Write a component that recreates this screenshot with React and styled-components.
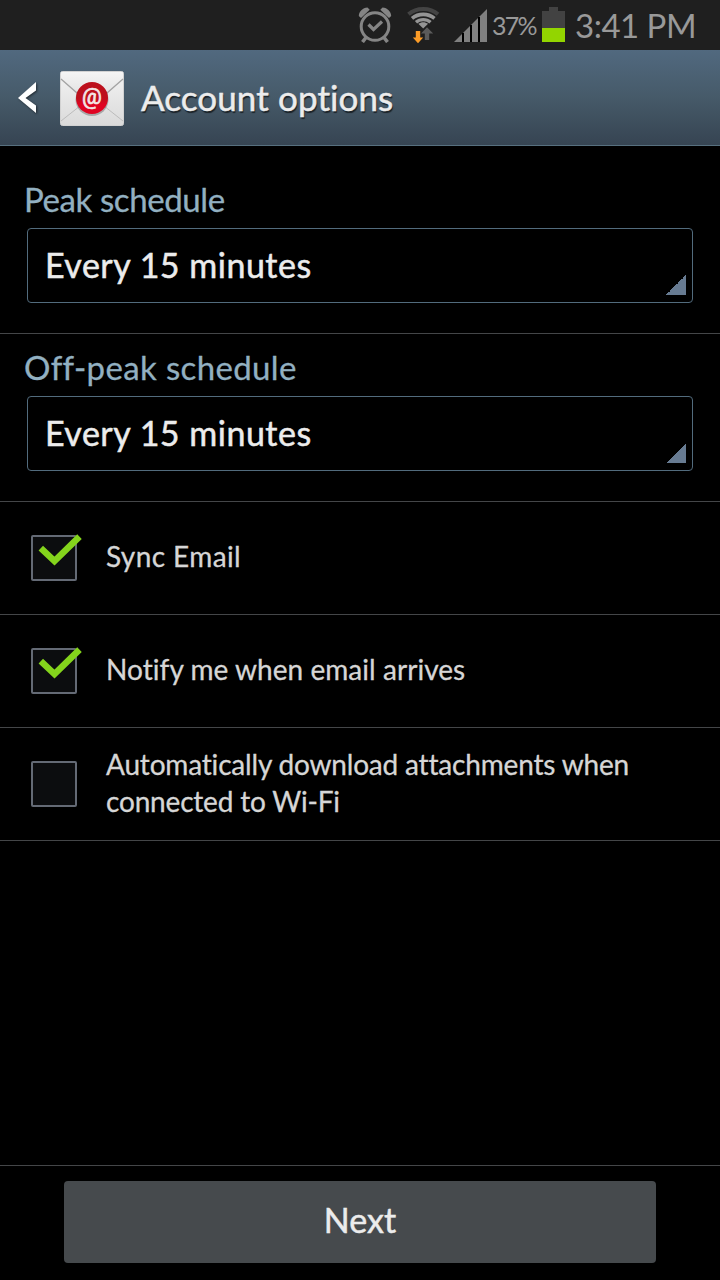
import React, { useState } from 'react';
import styled, { createGlobalStyle } from 'styled-components';

const SCHEDULES = [
  { id: 'peak', label: 'Peak schedule', value: 'Every 15 minutes', spacing: '-0.4px' },
  { id: 'offPeak', label: 'Off-peak schedule', value: 'Every 15 minutes', spacing: '0.35px' },
];

const OPTIONS = [
  { id: 'sync', text: 'Sync Email', checked: true, spacing: '0.4px' },
  { id: 'notify', text: 'Notify me when email arrives', checked: true, spacing: '0.05px' },
  { id: 'download', text: 'Automatically download attachments when connected to Wi-Fi', checked: false, spacing: '-0.18px' },
];

export default function App() {
  const [options, setOptions] = useState(OPTIONS);

  const toggle = (id) => {
    setOptions(options.map((o) => (o.id === id ? { ...o, checked: !o.checked } : o)));
  };

  return (
    <Screen>
      <GlobalStyle />
      <StatusBar>
        <AlarmIcon />
        <WifiIcon />
        <SignalIcon />
        <Percent>37%</Percent>
        <BatteryIcon />
        <Clock>3:41 PM</Clock>
      </StatusBar>
      <Header>
        <BackIcon />
        <MailIcon />
        <Title>Account options</Title>
      </Header>
      {SCHEDULES.map((s, i) => (
        <Schedule key={s.id} $first={i === 0}>
          <ScheduleLabel $spacing={s.spacing}>{s.label}</ScheduleLabel>
          <Spinner>{s.value}</Spinner>
        </Schedule>
      ))}
      {options.map((o) => (
        <OptionRow key={o.id} onClick={() => toggle(o.id)}>
          <CheckBox>{o.checked && <CheckMark />}</CheckBox>
          <OptionText $spacing={o.spacing}>{o.text}</OptionText>
        </OptionRow>
      ))}
      <Footer>
        <NextButton>Next</NextButton>
      </Footer>
    </Screen>
  );
}

function AlarmIcon() {
  return (
    <svg width="34" height="36" viewBox="0 0 34 36" fill="none" stroke="#858585">
      <circle cx="17" cy="19.5" r="13.8" strokeWidth="3" />
      <path d="M11 16l5 5 8.500-8" transform="translate(-.5 1.500)" strokeWidth="3.200" />
      <path d="M8 30.500l-3.500 4.500M26 30.500l3.500 4.500" strokeWidth="3.600" />
      <path d="M.8 9C1 4.500 4.500 .8 9.500 .5l2.200 2.300L3 11zM33.200 9C33 4.500 29.500 .8 24.500 .5l-2.200 2.300L31 11z" fill="#858585" stroke="none" />
    </svg>
  );
}

function WifiIcon() {
  return (
    <svg width="34" height="38" viewBox="0 0 34 38" fill="none">
      <path d="M1.500 8.300C9.500 1.300 23 1.300 31 8.300" stroke="#444" strokeWidth="4" />
      <path d="M5 12.300c6.500-5.300 16-5.300 22.500 0" stroke="#959595" strokeWidth="3.600" />
      <path d="M9 16.300c4-3.600 10.500-3.600 14.500 0" stroke="#959595" strokeWidth="3.400" />
      <path d="M11.300 17.800c3-2.200 6.800-2.200 9.800 0L16.200 22.500z" fill="#959595" />
      <path d="M8.800 25h4.400v6.500h3L11 37.200 5.800 31.500h3z" fill="#fc9c27" />
      <path d="M17.800 34h4.400v-6.500h4L20 21.300 14 27.500h3.800z" fill="#5b5b5b" />
    </svg>
  );
}

function SignalIcon() {
  return (
    <svg width="33" height="33" viewBox="0 0 33 33">
      <path d="M0 33L33 0v33z" fill="#808080" />
      <path d="M8 24h2v9H8zM16 16h2v17h-2zM24 8h2v25h-2z" fill="#000" />
    </svg>
  );
}

function BatteryIcon() {
  return (
    <BatterySvg width="23" height="35" viewBox="0 0 23 35">
      <path d="M7 0h9v4h7v17H0V4h7z" fill="#424242" />
      <path d="M0 21h23v14H0z" fill="#93d500" />
    </BatterySvg>
  );
}

function BackIcon() {
  return (
    <BackSvg width="20" height="34" viewBox="0 0 20 34">
      <path d="M18 1v8.500L7.500 17 18 24.500v7.500L0 17z" fill="#fff" />
    </BackSvg>
  );
}

function MailIcon() {
  return (
    <MailSvg width="64" height="55" viewBox="0 0 64 55">
      <defs>
        <linearGradient id="paper" x1="0" y1="0" x2="0" y2="1">
          <stop offset="0" stopColor="#f3f3f3" />
          <stop offset="1" stopColor="#dadada" />
        </linearGradient>
        <linearGradient id="flap" x1="0" y1="0" x2="0" y2="1">
          <stop offset="0" stopColor="#f5f5f5" />
          <stop offset="1" stopColor="#dcdcdc" />
        </linearGradient>
        <linearGradient id="seal" x1="0" y1="0" x2="0" y2="1">
          <stop offset="0" stopColor="#bd101c" />
          <stop offset=".5" stopColor="#bd101c" />
          <stop offset=".7" stopColor="#e00422" />
        </linearGradient>
      </defs>
      <rect x=".5" y=".5" width="63" height="54" rx="2" fill="url(#paper)" stroke="#d2d2d2" />
      <path d="M1 50L25 31M63 50L39 31" fill="none" stroke="#bcbcbc" />
      <path d="M1 8L1 2q0-1 1-1h60q1 0 1 1v6L38 31H26z" fill="url(#flap)" />
      <path d="M1 8l24 21M63 8L39 29" fill="none" stroke="#a3a3a3" strokeWidth="1.300" />
      <circle cx="32" cy="28.500" r="16.500" fill="#000" opacity=".25" />
      <circle cx="32" cy="27" r="16" fill="url(#seal)" />
      <text x="32" y="33" textAnchor="middle" fill="#f4e6e6" stroke="#f4e6e6" strokeWidth=".7" fontFamily="Roboto, sans-serif" fontSize="22">@</text>
    </MailSvg>
  );
}

function CheckMark() {
  return (
    <CheckSvg width="46" height="36" viewBox="0 0 46 36">
      <path d="M3.800 14.200L17.500 27 42.500 2.700" fill="none" stroke="#84d41c" strokeWidth="6.500" />
    </CheckSvg>
  );
}

const GlobalStyle = createGlobalStyle`
  body {
    margin: 0;
    background: #000;
  }
`;

const Screen = styled.div`
  width: 720px;
  height: 1280px;
  display: flex;
  flex-direction: column;
  overflow: hidden;
  background: #000;
  color: #ececec;
  font-family: "Choco cooky", Lato, "Open Sans", sans-serif;
`;

const StatusBar = styled.div`
  height: 50px;
  flex: none;
  display: flex;
  align-items: center;
  box-sizing: border-box;
  padding-left: 358px;
  background: #1f1f1f;
  color: #999;
  white-space: nowrap;

  svg {
    flex: none;
  }

  svg:nth-of-type(2) {
    margin-left: 15px;
  }

  svg:nth-of-type(3) {
    margin: 1px 6px 0 13px;
  }
`;

const Percent = styled.span`
  width: 49px;
  margin-left: -1px;
  font-size: 25px;
  letter-spacing: -1.8px;
  line-height: 50px;
`;

const BatterySvg = styled.svg`
  margin: 0 0 1px 1px;
`;

const Clock = styled.span`
  margin-left: 10px;
  font-size: 33px;
  line-height: 48px;
  letter-spacing: -0.5px;
`;

const Header = styled.div`
  height: 96px;
  flex: none;
  display: flex;
  align-items: center;
  box-sizing: border-box;
  padding-left: 18px;
  border-bottom: 1px solid #57707f;
  background: linear-gradient(#51697f, #465a69 50%, #364452);
`;

const BackSvg = styled.svg`
  filter: drop-shadow(1px 1px 1px #0008);
`;

const MailSvg = styled.svg`
  margin: 1px 0 0 22px;
`;

const Title = styled.h1`
  margin: -2px 0 0 17px;
  font-size: 35px;
  font-weight: 400;
  letter-spacing: 0.1px;
  text-shadow: 1px 2px 1px #0009;
  -webkit-text-stroke: 0.5px #ececec;
`;

const Schedule = styled.div`
  height: ${({ $first }) => ($first ? 188 : 168)}px;
  flex: none;
  display: flex;
  flex-direction: column;
  box-sizing: border-box;
  padding: ${({ $first }) => ($first ? 32 : 12)}px 27px 0;
  border-bottom: 1px solid #444648;
`;

const ScheduleLabel = styled.div`
  height: 50px;
  margin-left: -3px;
  color: #92b0c1;
  font-size: 33px;
  line-height: 42px;
  letter-spacing: ${({ $spacing }) => $spacing};
  -webkit-text-stroke: 0.3px #92b0c1;
`;

const Spinner = styled.div`
  height: 75px;
  box-sizing: border-box;
  padding-left: 17px;
  border: 1px solid #526b7d;
  border-radius: 4px;
  background: linear-gradient(135deg, transparent 50%, #677b92 50%) right 6px bottom 7px / 20px 20px no-repeat;
  font-size: 34px;
  line-height: 72px;
  letter-spacing: 0.5px;
  -webkit-text-stroke: 0.5px #ececec;
`;

const OptionRow = styled.div`
  height: 113px;
  flex: none;
  display: flex;
  align-items: center;
  box-sizing: border-box;
  padding: 0 60px 0 31px;
  border-bottom: 1px solid #444648;
  cursor: pointer;
`;

const CheckBox = styled.div`
  position: relative;
  width: 46px;
  height: 46px;
  flex: none;
  box-sizing: border-box;
  border: 2px solid #646a75;
  border-radius: 2px;
  background: #0c0d0f;
`;

const CheckSvg = styled.svg`
  position: absolute;
  left: 4px;
  top: -3px;
`;

const OptionText = styled.div`
  margin: -3px 0 0 29px;
  color: #d6d6d6;
  font-size: 28px;
  line-height: 37px;
  letter-spacing: ${({ $spacing }) => $spacing};
  -webkit-text-stroke: 0.3px #d6d6d6;
`;

const Footer = styled.div`
  height: 115px;
  flex: none;
  display: flex;
  box-sizing: border-box;
  margin-top: auto;
  padding: 15px 64px 17px;
  border-top: 1px solid #444648;
`;

const NextButton = styled.button`
  flex: 1;
  padding: 0 0 5px;
  border: none;
  border-radius: 4px;
  background: #464a4d;
  color: #ececec;
  font-family: inherit;
  font-size: 34px;
  -webkit-text-stroke: 0.5px #ececec;
`;
